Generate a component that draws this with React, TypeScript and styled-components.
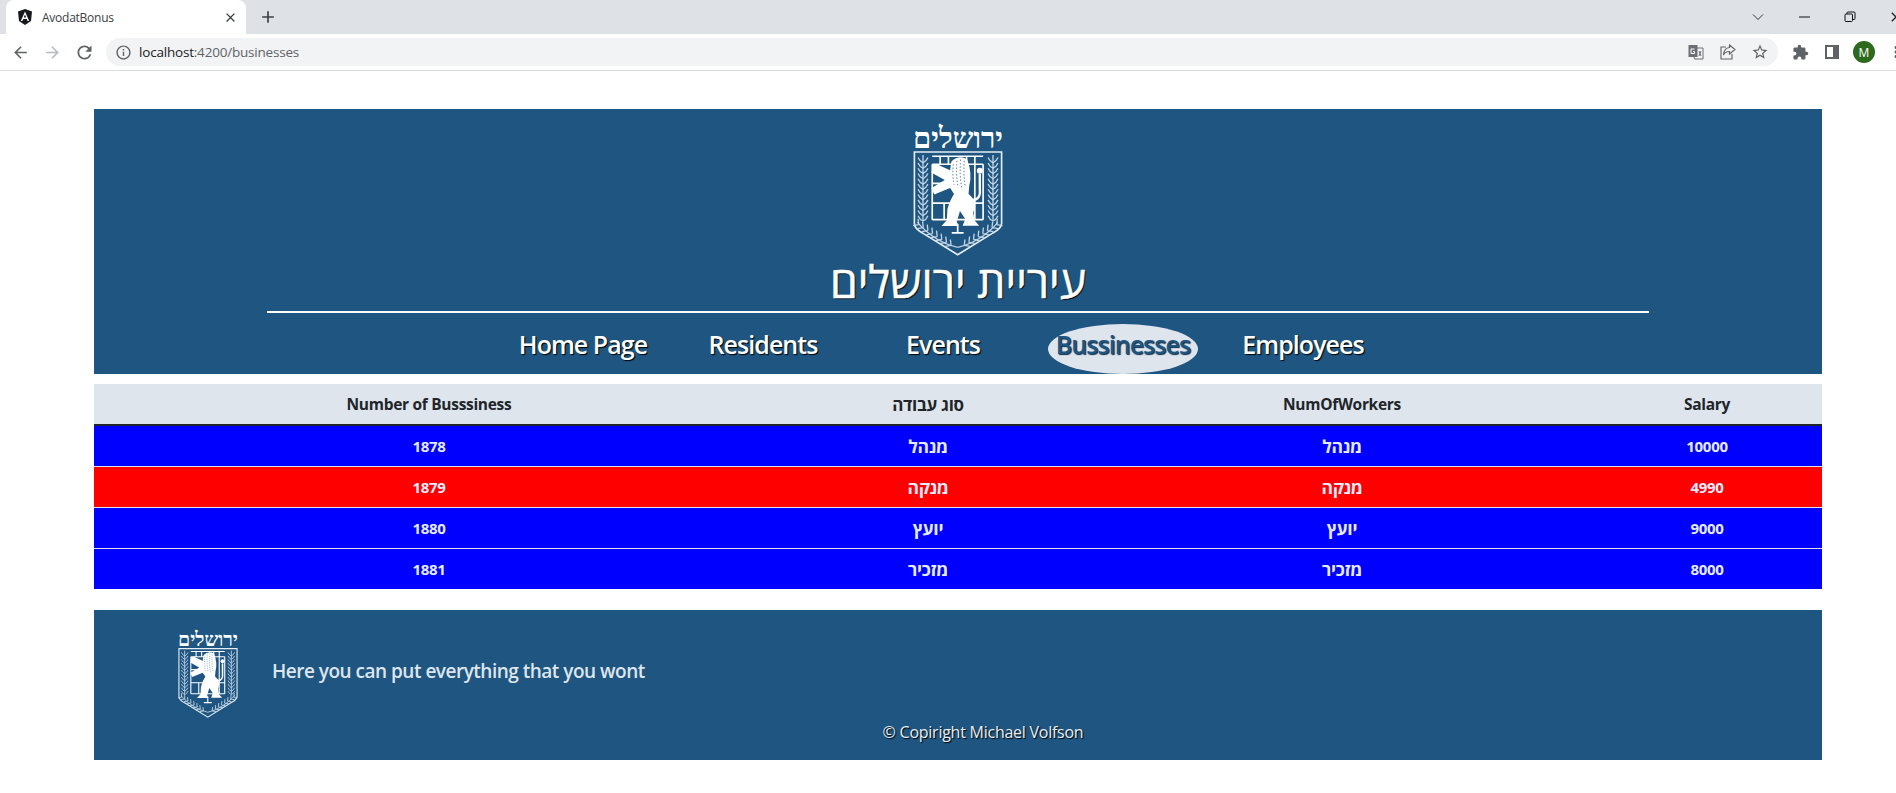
import React from "react";
import styled, { createGlobalStyle } from "styled-components";
import {
  MdAdd,
  MdArrowBack,
  MdArrowForward,
  MdClose,
  MdExtension,
  MdInfoOutline,
  MdMoreVert,
  MdRefresh,
  MdStarBorder,
} from "react-icons/md";

const GlobalStyle = createGlobalStyle`
  html, body {
    margin: 0;
    padding: 0;
    background: #fff;
    font-family: "Open Sans", "Liberation Sans", sans-serif;
    overflow: hidden;
  }
`;

const BLUE = "#1e5581";
const PALE = "#dee5ed";

// Browser chrome
const TabStrip = styled.div`
  height: 34px;
  background: #dee1e6;
  display: flex;
  align-items: stretch;
  padding-left: 6px;
  overflow: hidden;
`;

const Tab = styled.div`
  width: 240px;
  background: #fff;
  border-radius: 8px 8px 0 0;
  display: flex;
  align-items: center;
  padding: 0 8px 0 11px;
  box-sizing: border-box;
  gap: 9px;
`;

const TabTitle = styled.span`
  flex: 1;
  font-size: 12px;
  letter-spacing: -0.25px;
  color: #3c4043;
`;

const NewTab = styled.div`
  width: 44px;
  display: flex;
  align-items: center;
  justify-content: center;
  color: #3c4043;
`;

const WindowControls = styled.div`
  margin-left: auto;
  display: flex;
  align-items: center;
  margin-right: -23px;
`;

const WindowButton = styled.div<{ $w: number }>`
  width: ${(p) => p.$w}px;
  display: flex;
  justify-content: center;
  align-items: center;
`;

const Toolbar = styled.div`
  height: 36px;
  border-bottom: 1px solid #dadce0;
  display: flex;
  align-items: center;
  padding-left: 4px;
  overflow: hidden;
`;

const NavIcon = styled.div<{ $dim?: boolean }>`
  width: 32px;
  flex: none;
  display: flex;
  justify-content: center;
  color: ${(p) => (p.$dim ? "#b8babd" : "#5f6368")};
`;

const Omnibox = styled.div`
  width: 1672px;
  flex: none;
  margin: 0 6px;
  height: 28px;
  border-radius: 14px;
  background: #f1f3f4;
  display: flex;
  align-items: center;
  padding-left: 9px;
  box-sizing: border-box;
  color: #5f6368;
`;

const Url = styled.span`
  margin-left: 7px;
  flex: 1;
  font-size: 13.5px;
  letter-spacing: -0.2px;
  color: #5f6368;

  b {
    font-weight: 400;
    color: #202124;
  }
`;

const Avatar = styled.div`
  width: 22px;
  height: 22px;
  border-radius: 50%;
  background: #2d6a1e;
  color: #fff;
  font-size: 12px;
  display: flex;
  align-items: center;
  justify-content: center;
`;

const TrailingIcons = styled.div`
  display: flex;
  align-items: center;
  margin-right: 2px;
`;

// Page
const Page = styled.main`
  padding: 38px 74px 0 94px;
`;

const Header = styled.header`
  height: 265px;
  background: ${BLUE};
  display: flex;
  flex-direction: column;
  align-items: center;
  padding-top: 16px;
  box-sizing: border-box;
`;

const Title = styled.h1`
  margin: 1px 0 0;
  height: 48px;
  line-height: 48px;
  font-size: 44.5px;
  font-weight: 400;
  color: #fff;
  direction: rtl;
  -webkit-text-stroke: 0.5px #fff;
  text-shadow: 1px 1px 1px #000;
`;

const Rule = styled.hr`
  width: 80%;
  height: 2px;
  margin: 6px 0 0;
  border: 0;
  background: #fff;
`;

const Nav = styled.nav`
  display: flex;
  gap: 30px;
  margin-top: 11px;
  padding-right: 30px;
`;

const NavLink = styled.a<{ $active?: boolean }>`
  width: 150px;
  height: 50px;
  box-sizing: border-box;
  padding-bottom: 10px;
  display: flex;
  align-items: center;
  justify-content: center;
  font-size: 25px;
  font-weight: 600;
  letter-spacing: -0.95px;
  border-radius: 50%;
  color: ${(p) => (p.$active ? BLUE : "#fff")};
  background: ${(p) => (p.$active ? PALE : "transparent")};
  text-shadow: ${(p) => (p.$active ? "1px 1px 1px #0b2c48" : "1px 1px 1px #000")};
`;

const Table = styled.table`
  width: 100%;
  margin-top: 10px;
  border-collapse: collapse;
  table-layout: fixed;
`;

const HeadCell = styled.th<{ $hebrew?: boolean }>`
  height: 40px;
  padding: 0;
  background: ${PALE};
  color: #212529;
  font-size: ${(p) => (p.$hebrew ? 17 : 15.5)}px;
  font-weight: 700;
  letter-spacing: -0.3px;
  border-bottom: 2px solid #212529;
`;

const Row = styled.tr<{ $color: string }>`
  background: ${(p) => p.$color};
  color: #e6ecff;
`;

const Cell = styled.td<{ $hebrew?: boolean }>`
  height: 40px;
  padding: 0;
  text-align: center;
  font-size: ${(p) => (p.$hebrew ? 17.5 : 15)}px;
  font-weight: 700;
  letter-spacing: -0.3px;
  border-top: 1px solid #dee2e6;

  tr:first-child > & {
    border-top: 0;
  }
`;

const Footer = styled.footer`
  height: 150px;
  margin-top: 21px;
  background: ${BLUE};
  display: flex;
  flex-direction: column;
  box-sizing: border-box;
  padding: 21px 0 0 84px;
`;

const FooterTop = styled.div`
  display: flex;
  align-items: center;
  gap: 34px;
`;

const FooterText = styled.p`
  margin: 0 0 7px;
  font-size: 19px;
  font-weight: 600;
  letter-spacing: -0.5px;
  color: ${PALE};
`;

const Copyright = styled.div`
  margin-top: 3px;
  padding-right: 34px;
  text-align: center;
  font-size: 16px;
  letter-spacing: -0.25px;
  color: #e9eef4;
  text-shadow: 1px 1px 1px #000;
`;

// Emblem of the city
const EmblemBox = styled.div<{ $w: number }>`
  width: ${(p) => p.$w}px;
  display: flex;
  flex-direction: column;
  align-items: center;
  flex: none;
`;

const EmblemWord = styled.div<{ $w: number }>`
  font-family: "Liberation Serif", "DejaVu Serif", serif;
  font-size: ${(p) => p.$w * 0.325}px;
  font-weight: 700;
  line-height: ${(p) => p.$w * 0.29}px;
  color: #fff;
  direction: rtl;
  white-space: nowrap;
`;

const Stalk = ({ x }: { x: number }) => (
  <g stroke="#c3d4e4" strokeWidth="4" fill="none">
    <path d={`M${x} 132V330`} />
    {Array.from({ length: 12 }, (_, i) => {
      const y = 140 + i * 16;
      return <path key={i} d={`M${x - 15} ${y}Q${x - 10} ${y + 12} ${x} ${y + 16}Q${x + 10} ${y + 12} ${x + 15} ${y}`} />;
    })}
  </g>
);

const Laurel = ({ dir }: { dir: 1 | -1 }) => (
  <g stroke="#c3d4e4" strokeWidth="4" fill="none">
    <path d={`M533 412Q${533 + dir * 70} 395 ${533 + dir * 122} 336`} />
    {Array.from({ length: 8 }, (_, i) => {
      const x = 533 + dir * (20 + i * 14);
      const y = 406 - i * 9;
      return (
        <path
          key={i}
          d={`M${x} ${y}L${x + dir * 2} ${y - 18}M${x} ${y}L${x + dir * 18} ${y + 3}`}
        />
      );
    })}
  </g>
);

const Emblem = ({ w }: { w: number }) => (
  <EmblemBox $w={w}>
    <EmblemWord $w={w}>ירושלים</EmblemWord>
    <svg width={w} height={w * 1.167} viewBox="398 120 272 318">
      <path
        d="M402 123H666V340Q664 356 640 368L533 434L426 368Q403 356 402 340Z"
        fill="none"
        stroke="#e6edf3"
        strokeWidth="5"
      />
      <Stalk x={428} />
      <Stalk x={640} />
      <Laurel dir={-1} />
      <Laurel dir={1} />
      <g stroke="#fff" strokeWidth="5" fill="none">
        <path d="M456 136H610M456 160H610M480 136V160M505 136V160M560 136V160M585 136V160" />
        <path d="M456 160V328M610 160V328M456 278H610M456 328H610M456 218H500M585 160V278" />
        <path d="M492 278V328M585 278V328" />
        <path d="M533 340V368M515 368H551" />
      </g>
      <path
        d="M458 162L470 160L510 178L514 152Q538 130 562 146Q578 190 568 226L566 250Q594 272 580 306L584 330L598 346H548L556 326L540 302L534 322L530 334L536 347H484L500 330L502 296Q510 268 522 250L510 232L462 252L454 232L494 208L454 186Z"
        fill="#fff"
      />
      <path
        d="M574 268Q604 270 600 235V190"
        fill="none"
        stroke="#fff"
        strokeWidth="7"
      />
      <circle cx="600" cy="180" r="9" fill="#fff" />
      <g stroke={BLUE} strokeWidth="2.5" strokeDasharray="4 6" fill="none">
        <path d="M520 160Q516 190 522 222" />
        <path d="M531 150Q527 190 534 228" />
        <path d="M542 146Q538 190 545 230" />
        <path d="M553 150Q550 190 556 228" />
      </g>
    </svg>
  </EmblemBox>
);

const AngularIcon = () => (
  <svg width="16" height="16" viewBox="0 0 16 16">
    <path d="M8 0L15 2.5L14 12L8 16L2 12L1 2.5Z" fill="#16181b" />
    <path d="M8 2.5L3.8 12H5.4L6.2 10H9.8L10.6 12H12.2ZM6.8 8.6L8 5.6L9.2 8.6Z" fill="#fff" />
  </svg>
);

const RestoreIcon = () => (
  <svg width="12" height="12" viewBox="0 0 12 12" fill="none" stroke="#111" strokeWidth="1">
    <rect x="1" y="3" width="7.5" height="7.5" rx="1" />
    <path d="M3 3V2Q3 1 4 1H10Q11 1 11 2V7.5Q11 8.5 10 8.5H8.5" />
  </svg>
);

const TranslateIcon = () => (
  <svg width="16" height="16" viewBox="0 0 16 16">
    <rect x="0.5" y="1" width="9" height="12" fill="#6b6f74" />
    <path d="M9 4H15V15H6.5L6 13" fill="none" stroke="#6b6f74" strokeWidth="1" />
    <path d="M11 7L13 12M13 7L11 12" stroke="#6b6f74" strokeWidth="1" />
    <path d="M6.5 5H3V9.5H6.5V7.5H5" fill="none" stroke="#fff" strokeWidth="1" />
  </svg>
);

const ShareIcon = () => (
  <svg width="16" height="16" viewBox="0 0 16 16" fill="none" stroke="#5f6368" strokeWidth="1.1">
    <path d="M6 3H1V15H12V10" />
    <path d="M9.5 1L15 5.5L9.5 10V7.5Q5 7.5 3.5 11Q4 4 9.5 3.5Z" />
  </svg>
);

const SidePanelIcon = () => (
  <svg width="14" height="14" viewBox="0 0 14 14">
    <path d="M0 0H14V14H0ZM2 2V12H8V2Z" fill="#5f6368" fillRule="evenodd" />
  </svg>
);

const ChevronIcon = () => (
  <svg width="12" height="8" viewBox="0 0 12 8" fill="none" stroke="#333" strokeWidth="1">
    <path d="M1 1.5L6 6.5L11 1.5" />
  </svg>
);

const columns = ["Number of Busssiness", "סוג עבודה", "NumOfWorkers", "Salary"];
const widths = [670, 328, 500, 230];

const rows = [
  { id: 1878, job: "מנהל", salary: 10000 },
  { id: 1879, job: "מנקה", salary: 4990 },
  { id: 1880, job: "יועץ", salary: 9000 },
  { id: 1881, job: "מזכיר", salary: 8000 },
];

const links = ["Home Page", "Residents", "Events", "Bussinesses", "Employees"];

const App: React.FC = () => {
  return (
    <>
      <GlobalStyle />
      <TabStrip>
        <Tab>
          <AngularIcon />
          <TabTitle>AvodatBonus</TabTitle>
          <MdClose size={15} color="#3c4043" />
        </Tab>
        <NewTab>
          <MdAdd size={20} />
        </NewTab>
        <WindowControls>
          <WindowButton $w={46}>
            <ChevronIcon />
          </WindowButton>
          <WindowButton $w={46}>
            <svg width="11" height="2" viewBox="0 0 11 2">
              <path d="M0 1H11" stroke="#111" strokeWidth="1" />
            </svg>
          </WindowButton>
          <WindowButton $w={46}>
            <RestoreIcon />
          </WindowButton>
          <WindowButton $w={46}>
            <MdClose size={16} color="#222" />
          </WindowButton>
        </WindowControls>
      </TabStrip>
      <Toolbar>
        <NavIcon>
          <MdArrowBack size={19} />
        </NavIcon>
        <NavIcon $dim>
          <MdArrowForward size={19} />
        </NavIcon>
        <NavIcon>
          <MdRefresh size={21} />
        </NavIcon>
        <Omnibox>
          <MdInfoOutline size={17} />
          <Url>
            <b>localhost</b>:4200/businesses
          </Url>
          <TrailingIcons>
            <NavIcon>
              <TranslateIcon />
            </NavIcon>
            <NavIcon>
              <ShareIcon />
            </NavIcon>
            <NavIcon>
              <MdStarBorder size={18} />
            </NavIcon>
          </TrailingIcons>
        </Omnibox>
        <NavIcon>
          <MdExtension size={17} />
        </NavIcon>
        <NavIcon>
          <SidePanelIcon />
        </NavIcon>
        <NavIcon>
          <Avatar>M</Avatar>
        </NavIcon>
        <NavIcon>
          <MdMoreVert size={18} />
        </NavIcon>
      </Toolbar>
      <Page>
        <Header>
          <Emblem w={90} />
          <Title>עיריית ירושלים</Title>
          <Rule />
          <Nav>
            {links.map((link) => (
              <NavLink key={link} $active={link === "Bussinesses"}>
                {link}
              </NavLink>
            ))}
          </Nav>
        </Header>
        <Table>
          <colgroup>
            {widths.map((w) => (
              <col key={w} width={w} />
            ))}
          </colgroup>
          <thead>
            <tr>
              {columns.map((c) => (
                <HeadCell key={c} $hebrew={c === "סוג עבודה"}>
                  {c}
                </HeadCell>
              ))}
            </tr>
          </thead>
          <tbody>
            {rows.map((r) => (
              <Row key={r.id} $color={r.salary < 5000 ? "#ff0000" : "#0000ff"}>
                <Cell>{r.id}</Cell>
                <Cell $hebrew>{r.job}</Cell>
                <Cell $hebrew>{r.job}</Cell>
                <Cell>{r.salary}</Cell>
              </Row>
            ))}
          </tbody>
        </Table>
        <Footer>
          <FooterTop>
            <Emblem w={60} />
            <FooterText>Here you can put everything that you wont</FooterText>
          </FooterTop>
          <Copyright>© Copiright Michael Volfson</Copyright>
        </Footer>
      </Page>
    </>
  );
};

export default App;
